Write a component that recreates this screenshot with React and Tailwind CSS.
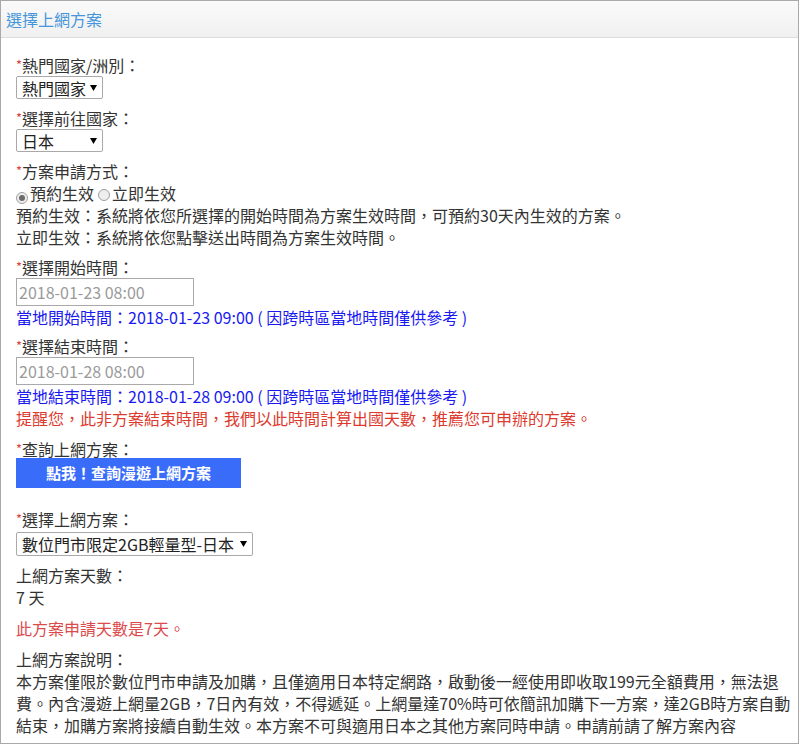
import React from 'react';

const Label = ({ children, required = true, className = '' }) => (
  <div className={`leading-[22px] ${className}`}>
    {required && <span className="text-[#d9443f] text-[13px] align-top">*</span>}
    {children}
  </div>
);

const Arrow = () => (
  <svg width="7" height="6" viewBox="0 0 7 6" className="shrink-0">
    <path d="M0 0h7L3.5 6z" fill="#000" />
  </svg>
);

const FakeSelect = ({ value, width, height = 'h-[23px]' }) => (
  <div
    className={`flex items-center justify-between border border-[#a9a9a9] rounded-[2px] bg-white pl-[5px] pr-[5px] text-[#222] leading-none ${width} ${height}`}
  >
    <span>{value}</span>
    <Arrow />
  </div>
);

const Radio = ({ checked }) => (
  <span className="inline-flex items-center justify-center w-[12px] h-[12px] rounded-full border border-[#a0a0a0] bg-[#eeeeee] mr-[2px] align-[-1px]">
    {checked && <span className="w-[6px] h-[6px] rounded-full bg-[#6b6b6b]" />}
  </span>
);

const FakeInput = ({ value }) => (
  <div className="h-[28px] w-[178px] border border-[#a9a9a9] flex items-center pl-[2px] text-[#9a9a9a] bg-white">
    {value}
  </div>
);

export default function App() {
  return (
    <div className="w-[799px] h-[744px] border border-[#a9a9a9] bg-white font-['Noto_Sans_CJK_TC',sans-serif] text-[16px] text-[#333] overflow-hidden">
      {/* 標題列 */}
      <div className="h-[37px] bg-gradient-to-b from-[#fafafa] to-[#f0f0f0] border-b border-[#dcdcdc] flex items-center pl-[5px]">
        <span className="text-[#4596dc] text-[16px]">選擇上網方案</span>
      </div>

      <div className="pl-[15px] pt-[16px]">
        <Label>熱門國家/洲別：</Label>
        <FakeSelect value="熱門國家" width="w-[87px]" />

        <Label className="mt-[8px]">選擇前往國家：</Label>
        <FakeSelect value="日本" width="w-[87px]" />

        <Label className="mt-[8px]">方案申請方式：</Label>
        <div className="leading-[22px]">
          <Radio checked />
          預約生效
          <span className="inline-block w-[4px]" />
          <Radio />
          立即生效
        </div>
        <div className="leading-[22px]">預約生效：系統將依您所選擇的開始時間為方案生效時間，可預約30天內生效的方案。</div>
        <div className="leading-[22px]">立即生效：系統將依您點擊送出時間為方案生效時間。</div>

        <Label className="mt-[8px]">選擇開始時間：</Label>
        <FakeInput value="2018-01-23 08:00" />
        <div className="leading-[22px] text-[#1a1af0]">當地開始時間：2018-01-23 09:00 ( 因跨時區當地時間僅供參考 )</div>

        <Label className="mt-[7px]">選擇結束時間：</Label>
        <FakeInput value="2018-01-28 08:00" />
        <div className="leading-[22px] text-[#1a1af0]">當地結束時間：2018-01-28 09:00 ( 因跨時區當地時間僅供參考 )</div>
        <div className="leading-[22px] text-[#dd3a2e]">提醒您，此非方案結束時間，我們以此時間計算出國天數，推薦您可申辦的方案。</div>

        <Label className="mt-[9px]">查詢上網方案：</Label>
        <button className="mt-[-2px] w-[225px] h-[30px] bg-[#3a6cfa] text-white font-bold text-[15px] flex items-center justify-center">
          點我！查詢漫遊上網方案
        </button>

        <Label className="mt-[20px]">選擇上網方案：</Label>
        <div className="mt-[2px]">
          <FakeSelect value="數位門市限定2GB輕量型-日本" width="w-[237px]" height="h-[24px]" />
        </div>

        <Label required={false} className="mt-[8px]">上網方案天數：</Label>
        <div className="leading-[22px]">7 天</div>

        <div className="leading-[22px] mt-[9px] text-[#dc4b4b]">此方案申請天數是7天。</div>

        <Label required={false} className="mt-[9px]">上網方案說明：</Label>
        <div className="leading-[22px] whitespace-nowrap">
          本方案僅限於數位門市申請及加購，且僅適用日本特定網路，啟動後一經使用即收取199元全額費用，無法退
          <br />
          費。內含漫遊上網量2GB，7日內有效，不得遞延。上網量達70%時可依簡訊加購下一方案，達2GB時方案自動
          <br />
          結束，加購方案將接續自動生效。本方案不可與適用日本之其他方案同時申請。申請前請了解方案內容
        </div>
      </div>
    </div>
  );
}
